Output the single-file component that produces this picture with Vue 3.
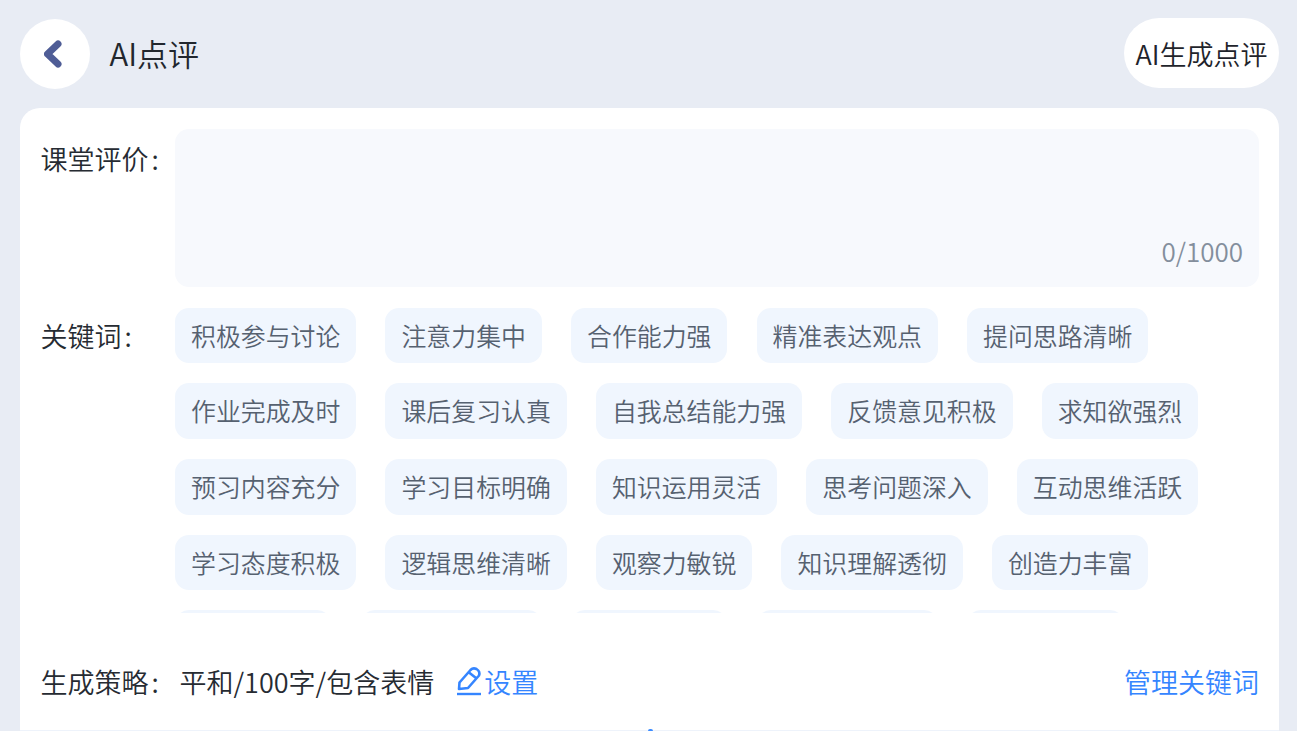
<script setup>
const rows = [
  ['积极参与讨论', '注意力集中', '合作能力强', '精准表达观点', '提问思路清晰'],
  ['作业完成及时', '课后复习认真', '自我总结能力强', '反馈意见积极', '求知欲强烈'],
  ['预习内容充分', '学习目标明确', '知识运用灵活', '思考问题深入', '互动思维活跃'],
  ['学习态度积极', '逻辑思维清晰', '观察力敏锐', '知识理解透彻', '创造力丰富'],
  ['专注力持久', '独立思考能力', '表达很流畅', '团队协作良好', '学习主动性']
]
const words = rows.flat()
</script>

<template>
  <div class="page">
    <header class="top">
      <div class="left">
        <button class="back" type="button" aria-label="返回">
          <svg width="22" height="28" viewBox="0 0 22 28"><path d="M14 4 L3.500 14 L14 24" fill="none" stroke="#4f5d96" stroke-width="7" stroke-linecap="round" stroke-linejoin="round"/></svg>
        </button>
        <span class="title">AI点评</span>
      </div>
      <button class="gen" type="button">AI生成点评</button>
    </header>
    <main class="card">
      <div class="field">
        <label class="label first">课堂评价<span class="colon">:</span></label>
        <div class="area"><span class="count">0/1000</span></div>
      </div>
      <div class="field kw">
        <label class="label">关键词<span class="colon">:</span></label>
        <div class="chips">
          <span v-for="w in words" :key="w" class="chip">{{ w }}</span>
        </div>
      </div>
      <footer class="foot">
        <div class="strategy">
          <span class="slabel">生成策略<span class="colon">:</span></span>
          <span class="sval">平和/100字/包含表情</span>
          <span class="set">
            <svg width="28" height="34" viewBox="0 0 28 34"><path d="M3 24 L3.500 17.500 L14.500 5 Q17 2.500 20.500 4 Q24.500 6.500 23 10.500 L12 23 Z M13 7.500 L20 13" fill="none" stroke="#3585ff" stroke-width="2.600" stroke-linejoin="round"/><path d="M1 29 H25" stroke="#3585ff" stroke-width="2.400"/></svg>
            <span>设置</span>
          </span>
        </div>
        <span class="manage">管理关键词</span>
      </footer>
    </main>
    <i class="dot"></i>
  </div>
</template>

<style>
html, body { margin: 0; background: #e8ecf4; }
</style>

<style scoped>
.page {
  position: relative;
  width: 1297px;
  height: 731px;
  overflow: hidden;
  box-sizing: border-box;
  padding: 18px 18px 0 19.500px;
  background: #e8ecf4;
  font-family: "Noto Sans CJK SC", "Noto Sans", sans-serif;
  font-weight: 350;
  display: flex;
  flex-direction: column;
}
.top {
  height: 71px;
  display: flex;
  justify-content: space-between;
  align-items: flex-start;
  margin-bottom: 19px;
  flex: none;
}
.left { display: flex; align-items: center; gap: 20px; margin-top: 1px; }
.back {
  width: 70px;
  height: 70px;
  border: 0;
  padding: 0;
  border-radius: 50%;
  background: #fff;
  display: flex;
  align-items: center;
  justify-content: center;
}
.title { font-size: 31px; color: #22272e; position: relative; top: -2px; }
.gen {
  width: 155px;
  height: 70px;
  border: 0;
  padding: 0;
  border-radius: 35px;
  background: #fff;
  color: #1f242b;
  font: inherit;
  font-size: 27px;
  white-space: nowrap;
}
.card {
  flex: 1;
  background: #fff;
  border-radius: 20px 20px 0 0;
  padding: 21px 20px 0 21px;
  min-height: 0;
  border-bottom: 1px solid #eef3fb;
}
.field { display: flex; }
.label {
  width: 134.500px;
  flex: none;
  font-size: 27px;
  line-height: 56px;
  color: #262b32;
  white-space: nowrap;
}
.label.first { line-height: 60px; }
.colon { margin-left: 3px; }
.area {
  flex: 1;
  height: 158px;
  background: #f7f9fd;
  border-radius: 14px;
  display: flex;
  align-items: flex-end;
  justify-content: flex-end;
  padding: 0 16px 18px 0;
  box-sizing: border-box;
}
.count { font-size: 26px; line-height: 36px; color: #838e9c; }
.kw { margin-top: 20.500px; }
.chips {
  flex: 1;
  height: 305.500px;
  overflow: hidden;
  display: flex;
  flex-wrap: wrap;
  gap: 20px 29.100px;
  align-content: flex-start;
  padding-right: 40px;
}
.chip {
  height: 55.700px;
  line-height: 55.700px;
  padding: 0 16px;
  background: #f0f6fe;
  border-radius: 14px;
  font-size: 24.900px;
  color: #566170;
  white-space: nowrap;
}
.foot {
  display: flex;
  justify-content: space-between;
  align-items: center;
  margin-top: 49px;
  font-size: 27px;
  line-height: 40px;
}
.strategy { display: flex; align-items: center; }
.slabel { width: 139px; color: #262b32; white-space: nowrap; }
.sval { color: #262b32; }
.set { display: flex; align-items: center; color: #3585ff; margin-left: 22px; }
.manage { color: #3585ff; }
.dot {
  position: absolute;
  left: 648px;
  top: 729px;
  width: 5px;
  height: 3px;
  border-radius: 2px 2px 0 0;
  background: #3c8cff;
}
</style>
